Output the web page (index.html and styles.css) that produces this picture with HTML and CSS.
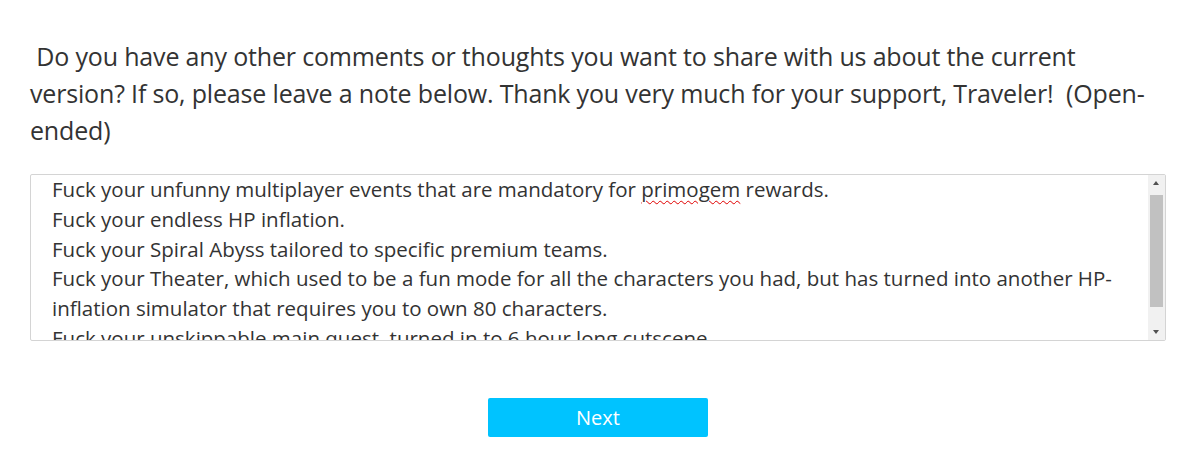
FILE: index.html
```html
<!DOCTYPE html>
<html>
<head>
<meta charset="utf-8">
<link rel="stylesheet" href="styles.css">
</head>
<body>
<div class="page">
  <div class="question">&nbsp;Do you have any other comments or thoughts you want to share with us about the current version? If so, please leave a note below. Thank you very much for your support, Traveler!&nbsp; (Open-ended)</div>
  <div class="answer">
    <div class="answer-text">
      <p>Fuck your unfunny multiplayer events that are mandatory for <span class="misspelled">primogem</span> rewards.</p>
      <p>Fuck your endless HP inflation.</p>
      <p>Fuck your Spiral Abyss tailored to specific premium teams.</p>
      <p>Fuck your Theater, which used to be a fun mode for all the characters you had, but has turned into another HP-inflation simulator that requires you to own 80 characters.</p>
      <p>Fuck your unskippable main quest, turned in to 6 hour long cutscene.</p>
    </div>
    <div class="scrollbar">
      <div class="sb-btn sb-up"></div>
      <div class="sb-track"><div class="sb-thumb"></div></div>
      <div class="sb-btn sb-down"></div>
    </div>
  </div>
  <div class="actions">
    <button class="next-btn">Next</button>
  </div>
</div>
</body>
</html>
```

FILE: styles.css
```css
html, body {
  margin: 0;
  padding: 0;
  background: #ffffff;
}
.page {
  padding: 38px 35px 0 30px;
  font-family: "Open Sans", "Noto Sans", sans-serif;
  color: #333333;
}
.question {
  font-size: 25px;
  line-height: 37px;
  letter-spacing: -0.17px;
}
.answer {
  position: relative;
  margin-top: 25px;
  height: 165px;
  border: 1px solid #d4d4d4;
  border-radius: 2px;
  overflow: hidden;
}
.answer-text {
  padding: 0 40px 0 21px;
  font-size: 20.5px;
  line-height: 29.75px;
}
.answer-text p {
  margin: 0;
}
.misspelled {
  text-decoration: underline wavy #e00000;
  text-decoration-thickness: 1px;
  text-underline-offset: 3px;
}
.scrollbar {
  position: absolute;
  top: 0;
  right: 0;
  bottom: 0;
  width: 17px;
  background: #f1f1f1;
  display: flex;
  flex-direction: column;
}
.sb-btn {
  height: 17px;
  position: relative;
}
.sb-up::after, .sb-down::after {
  content: "";
  position: absolute;
  left: 5px;
  width: 0;
  height: 0;
  border-left: 3.5px solid transparent;
  border-right: 3.5px solid transparent;
}
.sb-up::after {
  top: 6px;
  border-bottom: 4px solid #505050;
}
.sb-down::after {
  top: 7px;
  border-top: 4px solid #505050;
}
.sb-track {
  flex: 1;
  padding: 3px 2px;
}
.sb-thumb {
  height: 112px;
  background: #c1c1c1;
}
.actions {
  display: flex;
  justify-content: center;
  padding-top: 57px;
}
.next-btn {
  width: 220px;
  height: 39px;
  border: none;
  border-radius: 2px;
  background: #00c3ff;
  color: #ffffff;
  font-family: "Open Sans", "Noto Sans", sans-serif;
  font-size: 20px;
  padding: 0;
}
```
